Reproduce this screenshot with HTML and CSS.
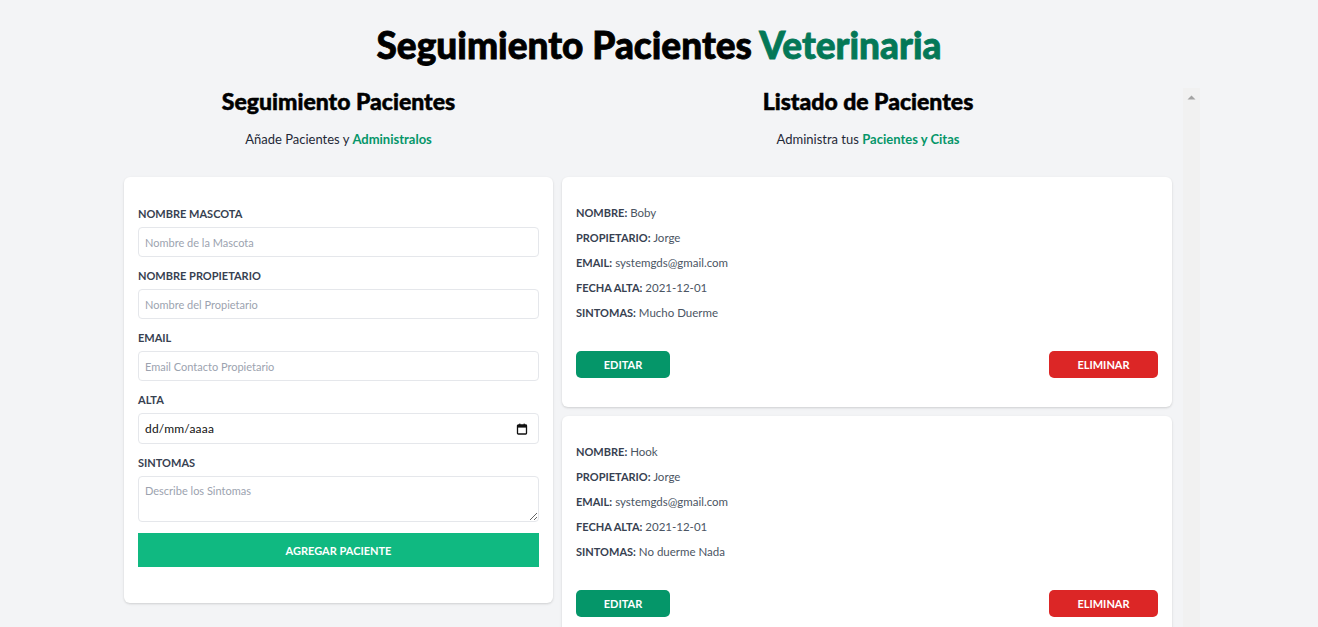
FILE: index.html
```html
<!DOCTYPE html>
<html lang="es">
<head>
<meta charset="utf-8">
<title>Seguimiento Pacientes Veterinaria</title>
<link rel="stylesheet" href="styles.css">
</head>
<body>
<h1 class="title">Seguimiento Pacientes <span class="title-accent">Veterinaria</span></h1>
<div class="layout">
  <section class="form-col">
    <h2 class="col-title">Seguimiento Pacientes</h2>
    <p class="col-sub">Añade Pacientes y <span class="sub-accent">Administralos</span></p>
    <form class="card form-card">
      <div class="field">
        <label class="field-label" for="mascota">Nombre Mascota</label>
        <input class="field-input" id="mascota" type="text" placeholder="Nombre de la Mascota">
      </div>
      <div class="field">
        <label class="field-label" for="propietario">Nombre Propietario</label>
        <input class="field-input" id="propietario" type="text" placeholder="Nombre del Propietario">
      </div>
      <div class="field">
        <label class="field-label" for="email">Email</label>
        <input class="field-input" id="email" type="email" placeholder="Email Contacto Propietario">
      </div>
      <div class="field">
        <label class="field-label">Alta</label>
        <div class="field-input date-input">
          <span class="date-text">dd/mm/aaaa</span>
          <svg class="date-icon" width="12" height="12" viewBox="0 0 12 12" aria-hidden="true">
            <rect x="1.5" y="2" width="9" height="9" rx="0.8" fill="none" stroke="#111" stroke-width="1.3"/>
            <rect x="1.5" y="2" width="9" height="2.6" fill="#111"/>
            <rect x="3.2" y="0.6" width="1.2" height="2" fill="#111"/>
            <rect x="7.6" y="0.6" width="1.2" height="2" fill="#111"/>
          </svg>
        </div>
      </div>
      <div class="field">
        <label class="field-label" for="sintomas">Sintomas</label>
        <textarea class="field-input field-area" id="sintomas" placeholder="Describe los Sintomas"></textarea>
      </div>
      <button class="btn-add" type="button">Agregar Paciente</button>
    </form>
  </section>
  <section class="list-col">
    <h2 class="col-title">Listado de Pacientes</h2>
    <p class="col-sub">Administra tus <span class="sub-accent">Pacientes y Citas</span></p>
    <article class="card patient">
      <p class="row"><span class="row-label">Nombre:</span> <span class="row-value">Boby</span></p>
      <p class="row"><span class="row-label">Propietario:</span> <span class="row-value">Jorge</span></p>
      <p class="row"><span class="row-label">Email:</span> <span class="row-value">systemgds@gmail.com</span></p>
      <p class="row"><span class="row-label">Fecha Alta:</span> <span class="row-value">2021-12-01</span></p>
      <p class="row"><span class="row-label">Sintomas:</span> <span class="row-value">Mucho Duerme</span></p>
      <div class="actions">
        <button class="btn btn-edit" type="button">Editar</button>
        <button class="btn btn-delete" type="button">Eliminar</button>
      </div>
    </article>
    <article class="card patient">
      <p class="row"><span class="row-label">Nombre:</span> <span class="row-value">Hook</span></p>
      <p class="row"><span class="row-label">Propietario:</span> <span class="row-value">Jorge</span></p>
      <p class="row"><span class="row-label">Email:</span> <span class="row-value">systemgds@gmail.com</span></p>
      <p class="row"><span class="row-label">Fecha Alta:</span> <span class="row-value">2021-12-01</span></p>
      <p class="row"><span class="row-label">Sintomas:</span> <span class="row-value">No duerme Nada</span></p>
      <div class="actions">
        <button class="btn btn-edit" type="button">Editar</button>
        <button class="btn btn-delete" type="button">Eliminar</button>
      </div>
    </article>
  </section>
</div>
</body>
</html>
```
FILE: styles.css
```css
html {
  overflow: hidden;
}
body {
  margin: 0;
  background: #f3f4f6;
  font-family: Lato, "Liberation Sans", sans-serif;
  color: #111827;
}
.title {
  margin: 25px 0 23px;
  text-align: center;
  font-size: 37px;
  line-height: 40px;
  font-weight: 900;
  color: #000;
  -webkit-text-stroke: 0.8px currentColor;
}
.title-accent {
  color: #047857;
}
.layout {
  display: flex;
  align-items: flex-start;
  width: 1076px;
  margin-left: 124px;
}
.form-col {
  flex: none;
  width: 429px;
}
.list-col {
  flex: 1;
  box-sizing: border-box;
  height: 627px;
  padding-right: 17px;
  overflow-y: auto;
  background:
    url("data:image/svg+xml,%3Csvg xmlns='http://www.w3.org/2000/svg' width='17' height='17'%3E%3Cpath d='M4.5 11.5h8L8.5 7.5z' fill='%23a3a3a3'/%3E%3C/svg%3E") no-repeat right top / 17px 17px,
    linear-gradient(to left, #f1f1f1 17px, transparent 17px);
}
.list-col::-webkit-scrollbar {
  display: none;
}
.col-title {
  margin: 0;
  text-align: center;
  font-size: 23px;
  line-height: 27px;
  font-weight: 900;
  color: #000;
  -webkit-text-stroke: 0.5px currentColor;
}
.col-sub {
  margin: 14px 0 27px;
  text-align: center;
  font-size: 13px;
  line-height: 21px;
  color: #1f2937;
}
.sub-accent {
  color: #059669;
  font-weight: 700;
}
.card {
  background: #fff;
  border-radius: 6px;
  box-shadow: 0 1px 3px rgba(0, 0, 0, 0.1), 0 1px 2px rgba(0, 0, 0, 0.06);
}
.form-card {
  display: block;
  padding: 29px 14px 36px;
}
.field {
  margin-bottom: 11px;
}
.field-label {
  display: block;
  margin-bottom: 5px;
  font-size: 11px;
  line-height: 16px;
  font-weight: 700;
  text-transform: uppercase;
  color: #374151;
}
.field-input {
  display: block;
  box-sizing: border-box;
  width: 100%;
  height: 30px;
  margin: 0;
  padding: 0 6px;
  border: 1.5px solid #e5e7eb;
  border-radius: 4px;
  background: #fff;
  font-family: inherit;
  font-size: 11px;
  color: #111827;
  outline: none;
}
.field-input::placeholder {
  color: #9ca3af;
}
.date-input {
  display: flex;
  align-items: center;
  justify-content: space-between;
  height: 31px;
  padding: 0 10px 0 6px;
}
.date-text {
  font-size: 12px;
  letter-spacing: 0.2px;
  color: #111;
}
.date-icon {
  display: block;
}
.field-area {
  height: 46px;
  padding: 7px 6px;
  resize: vertical;
}
.btn-add {
  display: block;
  width: 100%;
  height: 34px;
  border: none;
  background: #10b981;
  color: #fff;
  font-family: inherit;
  font-size: 11px;
  font-weight: 700;
  text-transform: uppercase;
}
.patient {
  margin: 0 11px 9px 9px;
  padding: 28px 14px 29px;
}
.row {
  margin: 0 0 9px;
  font-size: 11.5px;
  line-height: 16px;
}
.row-label {
  font-size: 11px;
  font-weight: 700;
  text-transform: uppercase;
  color: #374151;
}
.row-value {
  color: #4b5563;
}
.actions {
  display: flex;
  justify-content: space-between;
  margin-top: 30px;
}
.btn {
  height: 27px;
  border: none;
  border-radius: 5px;
  color: #fff;
  font-family: inherit;
  font-size: 11px;
  font-weight: 700;
  text-transform: uppercase;
}
.btn-edit {
  width: 94px;
  background: #059669;
}
.btn-delete {
  width: 109px;
  background: #dc2626;
}
```
